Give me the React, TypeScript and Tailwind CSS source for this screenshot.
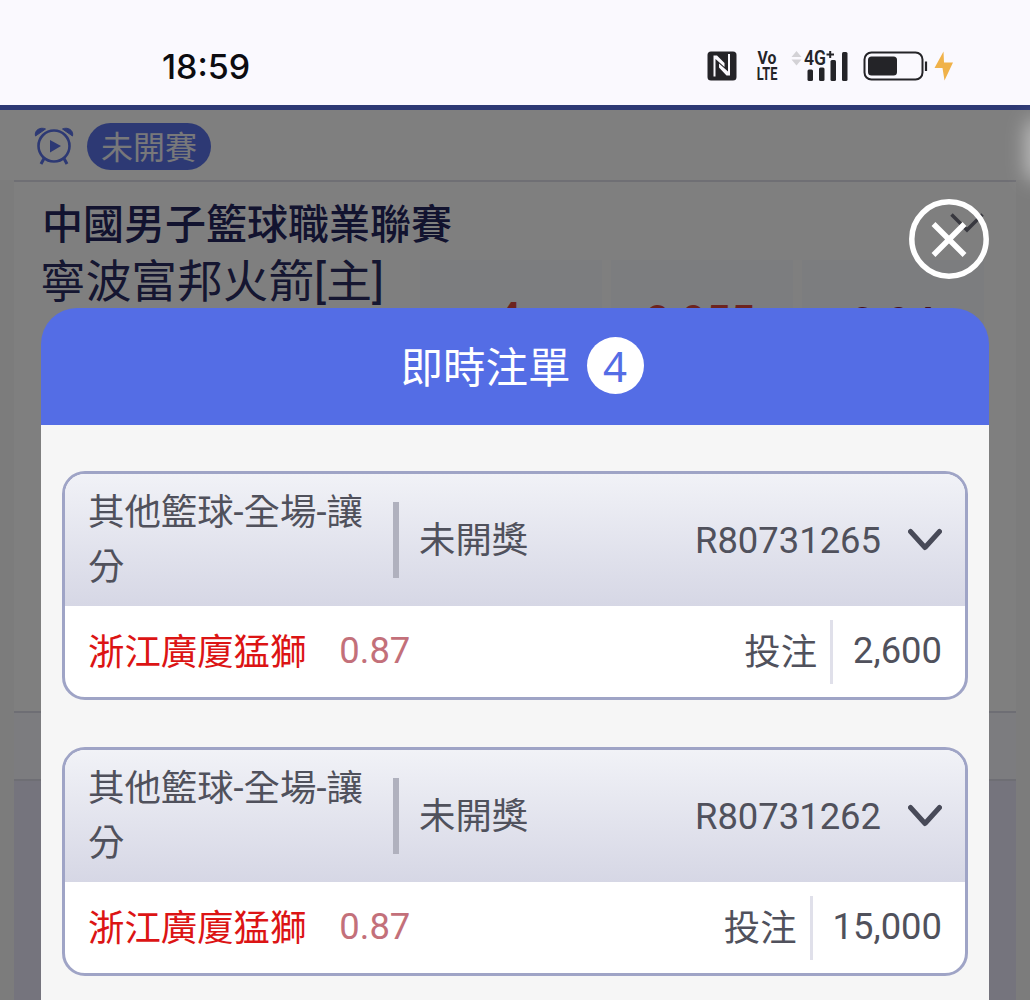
import { ReactNode } from "react";

const bets = [
  { id: "R80731265", game: "其他籃球-全場-讓分", status: "未開獎", team: "浙江廣廈猛獅", odds: "0.87", amount: "2,600" },
  { id: "R80731262", game: "其他籃球-全場-讓分", status: "未開獎", team: "浙江廣廈猛獅", odds: "0.87", amount: "15,000" },
];

function StatusBar() {
  return (
    <header className="flex h-[105px] shrink-0 items-center justify-between bg-[#faf9fe] pt-[27px] pr-[76px] pl-[162px]">
      <span className="pt-0.5 font-['Inter'] text-[34px] leading-none font-medium text-[#0c0c10]">18:59</span>
      <div className="flex items-center text-[#242428]">
        <svg width="30" height="30" viewBox="0 0 30 30">
          <rect x="0.5" y="0.5" width="29" height="29" rx="3.5" fill="currentColor" />
          <path d="M6.500 25.500V4.500H10L17.500 12V16L8.500 8V25.500Z" fill="#faf9fe" />
          <path d="M21 3V20.500L12 12.500V16.500L19.500 24.500H23V3Z" fill="#faf9fe" />
        </svg>
        <div className="ml-[18px] flex w-6 flex-col items-center font-['Roboto'] text-[15px] leading-[16px] font-bold">
          <span className="scale-x-105 scale-y-125">Vo</span>
          <span className="scale-x-85 scale-y-125">LTE</span>
        </div>
        <svg className="ml-[12px] overflow-visible" width="58" height="32" viewBox="0 0 58 32">
          <path d="M0.500 7L5.500 1L10.500 7ZM0.500 9.500L5.500 15.500L10.500 9.500Z" fill="#d3d2d6" />
          <text x="13" y="15" fontFamily="Roboto" fontWeight="600" fontSize="19.500" textLength="22" lengthAdjust="spacingAndGlyphs" fill="currentColor">4G</text>
          <path d="M35.500 4.500H43M39.200 1V8" stroke="currentColor" strokeWidth="2" />
          <rect x="16.500" y="19.500" width="5.500" height="11.500" rx="1.500" fill="currentColor" />
          <rect x="28" y="17.500" width="5.500" height="13.500" rx="1.500" fill="currentColor" />
          <rect x="39.500" y="10" width="5.500" height="21" rx="1.500" fill="currentColor" />
          <rect x="51" y="2" width="5.500" height="29" rx="1.500" fill="currentColor" />
        </svg>
        <svg className="ml-[14px]" width="91" height="30" viewBox="0 0 91 30">
          <rect x="1.500" y="1.500" width="58" height="27" rx="7" fill="none" stroke="currentColor" strokeWidth="2" />
          <rect x="5" y="5.500" width="29" height="19" rx="3.500" fill="currentColor" />
          <path d="M63 10.500V20" stroke="currentColor" strokeWidth="2.200" />
          <path d="M80.500 0.500L71.500 17H79.500L81.500 29.500L90 11.500H81Z" fill="#f0b24a" />
        </svg>
      </div>
    </header>
  );
}

function OddsCell({ children }: { children?: ReactNode }) {
  return (
    <div className="flex h-[190px] flex-1 justify-center bg-[#f8fafe] text-[43px] leading-none font-medium">
      {children}
    </div>
  );
}

function MatchPage() {
  return (
    <div className="flex h-full flex-col border-t-[5px] border-[#5b73e8] bg-[#f8f8f8]">
      <div className="flex h-[70px] shrink-0 items-center gap-[13px] bg-[#fefefe] pt-[3px] pl-[34px]">
        <svg width="40" height="40" viewBox="0 0 40 40" fill="none" stroke="#5b73e8">
          <circle cx="20" cy="19" r="15.500" strokeWidth="2.600" />
          <path d="M10 31.500L7 37M30 31.500L33 37" strokeWidth="3" />
          <path d="M1.500 9C0 3.500 6 -0.500 11.500 2Z M38.500 9C40 3.500 34 -0.500 28.500 2Z" fill="#5b73e8" />
          <path d="M16 13V25.500L27 19Z" fill="#5b73e8" stroke="none" />
        </svg>
        <span className="flex h-[47px] items-center rounded-full bg-[#5b73e8] px-[14px] pt-[3px] text-[32px] text-[#f0f0f5]">未開賽</span>
      </div>
      <div className="mx-[14px] flex h-[531px] shrink-0 flex-col border-t-2 border-[#dfdfe8] bg-[#fefefe] pt-[18px] pr-8 pl-[28px]">
        <div className="flex h-[48px] items-center justify-between text-[#24265e]">
          <span className="pt-0.5 text-[41px] leading-[48px] font-medium">中國男子籃球職業聯賽</span>
          <svg className="-mt-0.5" width="34" height="20" viewBox="0 0 34 20" fill="none" stroke="#70717e" strokeWidth="3.500">
            <path d="M1.500 1.500L17 17L32.500 1.500" />
          </svg>
        </div>
        <div className="flex pt-[12px]">
          <p className="-mt-[3px] -ml-0.5 w-[380px] text-[45.700px] leading-[52px] text-[#2a2c62]">寧波富邦火箭[主]</p>
          <div className="flex flex-1 gap-[9px]">
            <OddsCell><span className="pt-[36px] pr-1 text-[#d8463e]">4</span></OddsCell>
            <OddsCell><span className="pt-[39px] pr-1 text-[#d8463e]">0.955</span></OddsCell>
            <OddsCell><span className="pt-[41px] text-[#8a2038]">0.94</span></OddsCell>
          </div>
        </div>
      </div>
      <div className="mx-[14px] h-[70px] shrink-0 border-y-2 border-[#dcdde8] bg-[#f8f9fe]" />
      <div className="mx-[14px] flex-1 bg-[#ebe9fb]" />
    </div>
  );
}

function BetCard({ bet }: { bet: (typeof bets)[number] }) {
  return (
    <article className="flex h-[229px] shrink-0 flex-col overflow-hidden rounded-[23px] border-[3px] border-[#9fa4c6] bg-white text-[36.400px] text-[#50515c]">
      <div className="flex h-[132px] items-center bg-linear-to-b from-[#f1f2f7] to-[#d6d7e5] pr-[23px] pl-[23px]">
        <p className="w-[305px] pr-[20px] leading-[55px] break-all">{bet.game}</p>
        <div className="h-[76px] w-[6px] bg-[#b0b1be]" />
        <span className="ml-5 pt-[3px]">{bet.status}</span>
        <span className="ml-auto pt-0.5">{bet.id}</span>
        <svg className="ml-[27px]" width="34" height="24" viewBox="0 0 34 24" fill="none" stroke="#484a58" strokeWidth="5" strokeLinecap="round" strokeLinejoin="round">
          <path d="M2.500 3.500L17 19.500L31.500 3.500" />
        </svg>
      </div>
      <div className="flex flex-1 items-center px-[23px]">
        <span className="pt-[3px] text-[#dc1414]">{bet.team}</span>
        <span className="ml-[33px] text-[#c3707a]">{bet.odds}</span>
        <span className="ml-auto pt-[3px]">投注</span>
        <div className="mr-5 ml-[13px] h-16 w-[3px] bg-[#e0e0ea]" />
        <span>{bet.amount}</span>
      </div>
    </article>
  );
}

function BetSlip() {
  return (
    <section className="absolute inset-x-[41px] top-[308px] bottom-0 flex flex-col overflow-hidden rounded-t-[36px] bg-[#546de5]">
      <div className="flex h-[117px] shrink-0 items-center justify-center gap-4 pl-[14px] text-white">
        <h1 className="pt-[5px] text-[42.500px]">即時注單</h1>
        <span className="mb-[3px] flex size-[57px] items-center justify-center rounded-full bg-white pt-px font-['Noto_Sans'] text-[42px] text-[#546de5]">4</span>
      </div>
      <div className="flex flex-1 flex-col gap-[47px] bg-[#f6f6f6] px-[21px] pt-[46px]">
        {bets.map((bet) => (
          <BetCard key={bet.id} bet={bet} />
        ))}
      </div>
    </section>
  );
}

export default function App() {
  return (
    <div className="relative flex h-[1000px] w-[1030px] flex-col overflow-hidden font-['Roboto','Noto_Sans_CJK_TC',sans-serif]">
      <StatusBar />
      <main className="min-h-0 flex-1">
        <MatchPage />
      </main>
      <div className="absolute inset-x-0 top-[105px] bottom-0 bg-black/50" />
      <div className="absolute top-[125px] -right-[14px] h-[50px] w-[12px] rounded-full shadow-[0_0_20px_6px_rgba(255,255,255,0.5)]" />
      <button className="absolute top-[199px] left-[909px] size-20" aria-label="close">
        <svg width="80" height="80" viewBox="0 0 80 80" fill="none" stroke="white" strokeWidth="5.500">
          <circle cx="40" cy="40" r="37.200" />
          <path d="M24.500 25L55.500 56M55.500 25L24.500 56" />
        </svg>
      </button>
      <BetSlip />
    </div>
  );
}
